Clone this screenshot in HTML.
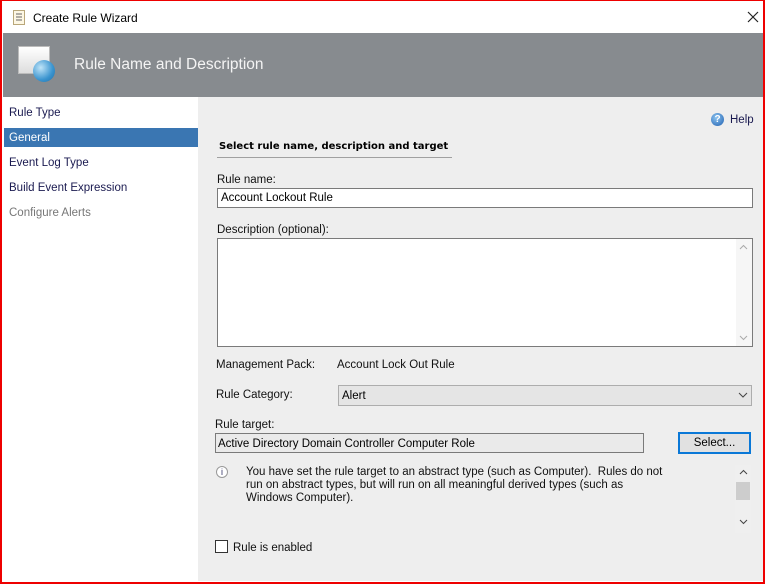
<!DOCTYPE html>
<html><head><style>
*{margin:0;padding:0;box-sizing:border-box}
body{width:765px;height:584px;background:#fff;position:relative;overflow:hidden;font-family:"Liberation Sans",sans-serif;font-size:11.5px;color:#000}
.a{position:absolute}
.lbl{font-size:11.5px;color:#111;margin-top:2px}
</style></head><body>
<div class="a" style="left:0;top:0;width:765px;height:584px;border:2px solid #e00;border-top:1px solid #e00"></div>
<div class="a" style="left:2px;top:1px;width:761px;height:580px;background:#fff"></div>
<svg class="a" style="left:12px;top:10px" width="14" height="16"><rect x="1.5" y="0.5" width="11" height="14" fill="#fdf7e4" stroke="#b9a77a"/><path d="M4 4h6M4 7h6M4 10h6" stroke="#666"/></svg>
<div class="a" style="left:33px;top:11px;font-size:12px">Create Rule Wizard</div>
<svg class="a" style="left:747px;top:11px" width="12" height="12"><path d="M1 1L11 11M11 1L1 11" stroke="#222" stroke-width="1.2"/></svg>
<div class="a" style="left:3px;top:33px;width:760px;height:64px;background:#878b8f"></div>
<div class="a" style="left:18px;top:46px;width:32px;height:28px;background:linear-gradient(#fff,#ddd);border:1px solid #bbb"></div>
<div class="a" style="left:33px;top:60px;width:22px;height:22px;border-radius:50%;background:radial-gradient(circle at 35% 35%,#bfe4f8,#3a94cf 60%,#1f6ea8)"></div>
<div class="a" style="left:74px;top:56px;font-size:15.5px;color:#f4f4f4">Rule Name and Description</div>
<div class="a" style="left:4px;top:128px;width:194px;height:19px;background:#3a76b2"></div>
<div class="a lbl" style="left:9px;top:105px;color:#1a1a50">Rule Type</div>
<div class="a lbl" style="left:9px;top:130px;color:#fff">General</div>
<div class="a lbl" style="left:9px;top:155px;color:#1a1a50">Event Log Type</div>
<div class="a lbl" style="left:9px;top:180px;color:#1a1a50">Build Event Expression</div>
<div class="a lbl" style="left:9px;top:205px;color:#777">Configure Alerts</div>
<div class="a" style="left:198px;top:97px;width:565px;height:484px;background:#eeeeee"></div>
<div class="a" style="left:711px;top:113px;width:13px;height:13px;border-radius:50%;background:radial-gradient(circle at 40% 35%,#8cc4f0,#1f5fb0);color:#fff;font-size:10px;font-weight:bold;text-align:center;line-height:13px">?</div>
<div class="a lbl" style="left:730px;top:112px;color:#1a1a50">Help</div>
<div class="a" style="left:219px;top:141px;font-weight:bold;font-family:'DejaVu Sans',sans-serif;font-size:10px">Select rule name, description and target</div>
<div class="a" style="left:217px;top:157px;width:235px;height:1px;background:#a0a0a0"></div>
<div class="a lbl" style="left:217px;top:172px">Rule name:</div>
<div class="a" style="left:217px;top:188px;width:536px;height:20px;background:#fff;border:1px solid #7a7a7a;padding:3px 3px;font-size:11.5px">Account Lockout Rule</div>
<div class="a lbl" style="left:217px;top:222px">Description (optional):</div>
<div class="a" style="left:217px;top:238px;width:536px;height:109px;background:#fff;border:1px solid #7a7a7a"></div>
<div class="a" style="left:736px;top:239px;width:16px;height:107px;background:#f6f6f6"></div>
<svg class="a" style="left:739px;top:244px" width="9" height="100"><path d="M1 5L4.5 1.5L8 5M1 92L4.5 95.5L8 92" stroke="#aaa" fill="none"/></svg>
<div class="a lbl" style="left:216px;top:357px">Management Pack:</div>
<div class="a lbl" style="left:337px;top:357px">Account Lock Out Rule</div>
<div class="a lbl" style="left:216px;top:387px">Rule Category:</div>
<div class="a" style="left:338px;top:385px;width:414px;height:21px;background:#e5e5e5;border:1px solid #adadad;padding:4px 3px;font-size:11.5px">Alert</div>
<svg class="a" style="left:738px;top:392px" width="10" height="7"><path d="M1 1L5 5L9 1" stroke="#444" fill="none"/></svg>
<div class="a lbl" style="left:215px;top:417px">Rule target:</div>
<div class="a" style="left:215px;top:433px;width:429px;height:20px;background:#eaeaea;border:1px solid #7a7a7a;padding:4px 2px;font-size:11.5px">Active Directory Domain Controller Computer Role</div>
<div class="a" style="left:678px;top:432px;width:73px;height:22px;background:#e1e1e1;border:2px solid #0a78d7;text-align:center;line-height:19px;font-size:11.5px">Select...</div>
<div class="a" style="left:216px;top:466px;width:12px;height:12px;border-radius:50%;border:1px solid #999;background:#fff;font-size:9px;text-align:center;line-height:10px;color:#336">i</div>
<div class="a lbl" style="left:246px;top:464px;width:420px;line-height:13px">You have set the rule target to an abstract type (such as Computer).&nbsp; Rules do not run on abstract types, but will run on all meaningful derived types (such as Windows Computer).</div>
<div class="a" style="left:735px;top:465px;width:16px;height:68px;background:#efefef"></div>
<svg class="a" style="left:739px;top:469px" width="9" height="60"><path d="M1 5L4.5 1.5L8 5M1 51L4.5 54.5L8 51" stroke="#444" fill="none"/></svg>
<div class="a" style="left:736px;top:482px;width:14px;height:18px;background:#cdcdcd"></div>
<div class="a" style="left:215px;top:540px;width:13px;height:13px;background:#fff;border:1px solid #333"></div>
<div class="a lbl" style="left:233px;top:540px">Rule is enabled</div>
</body></html>
